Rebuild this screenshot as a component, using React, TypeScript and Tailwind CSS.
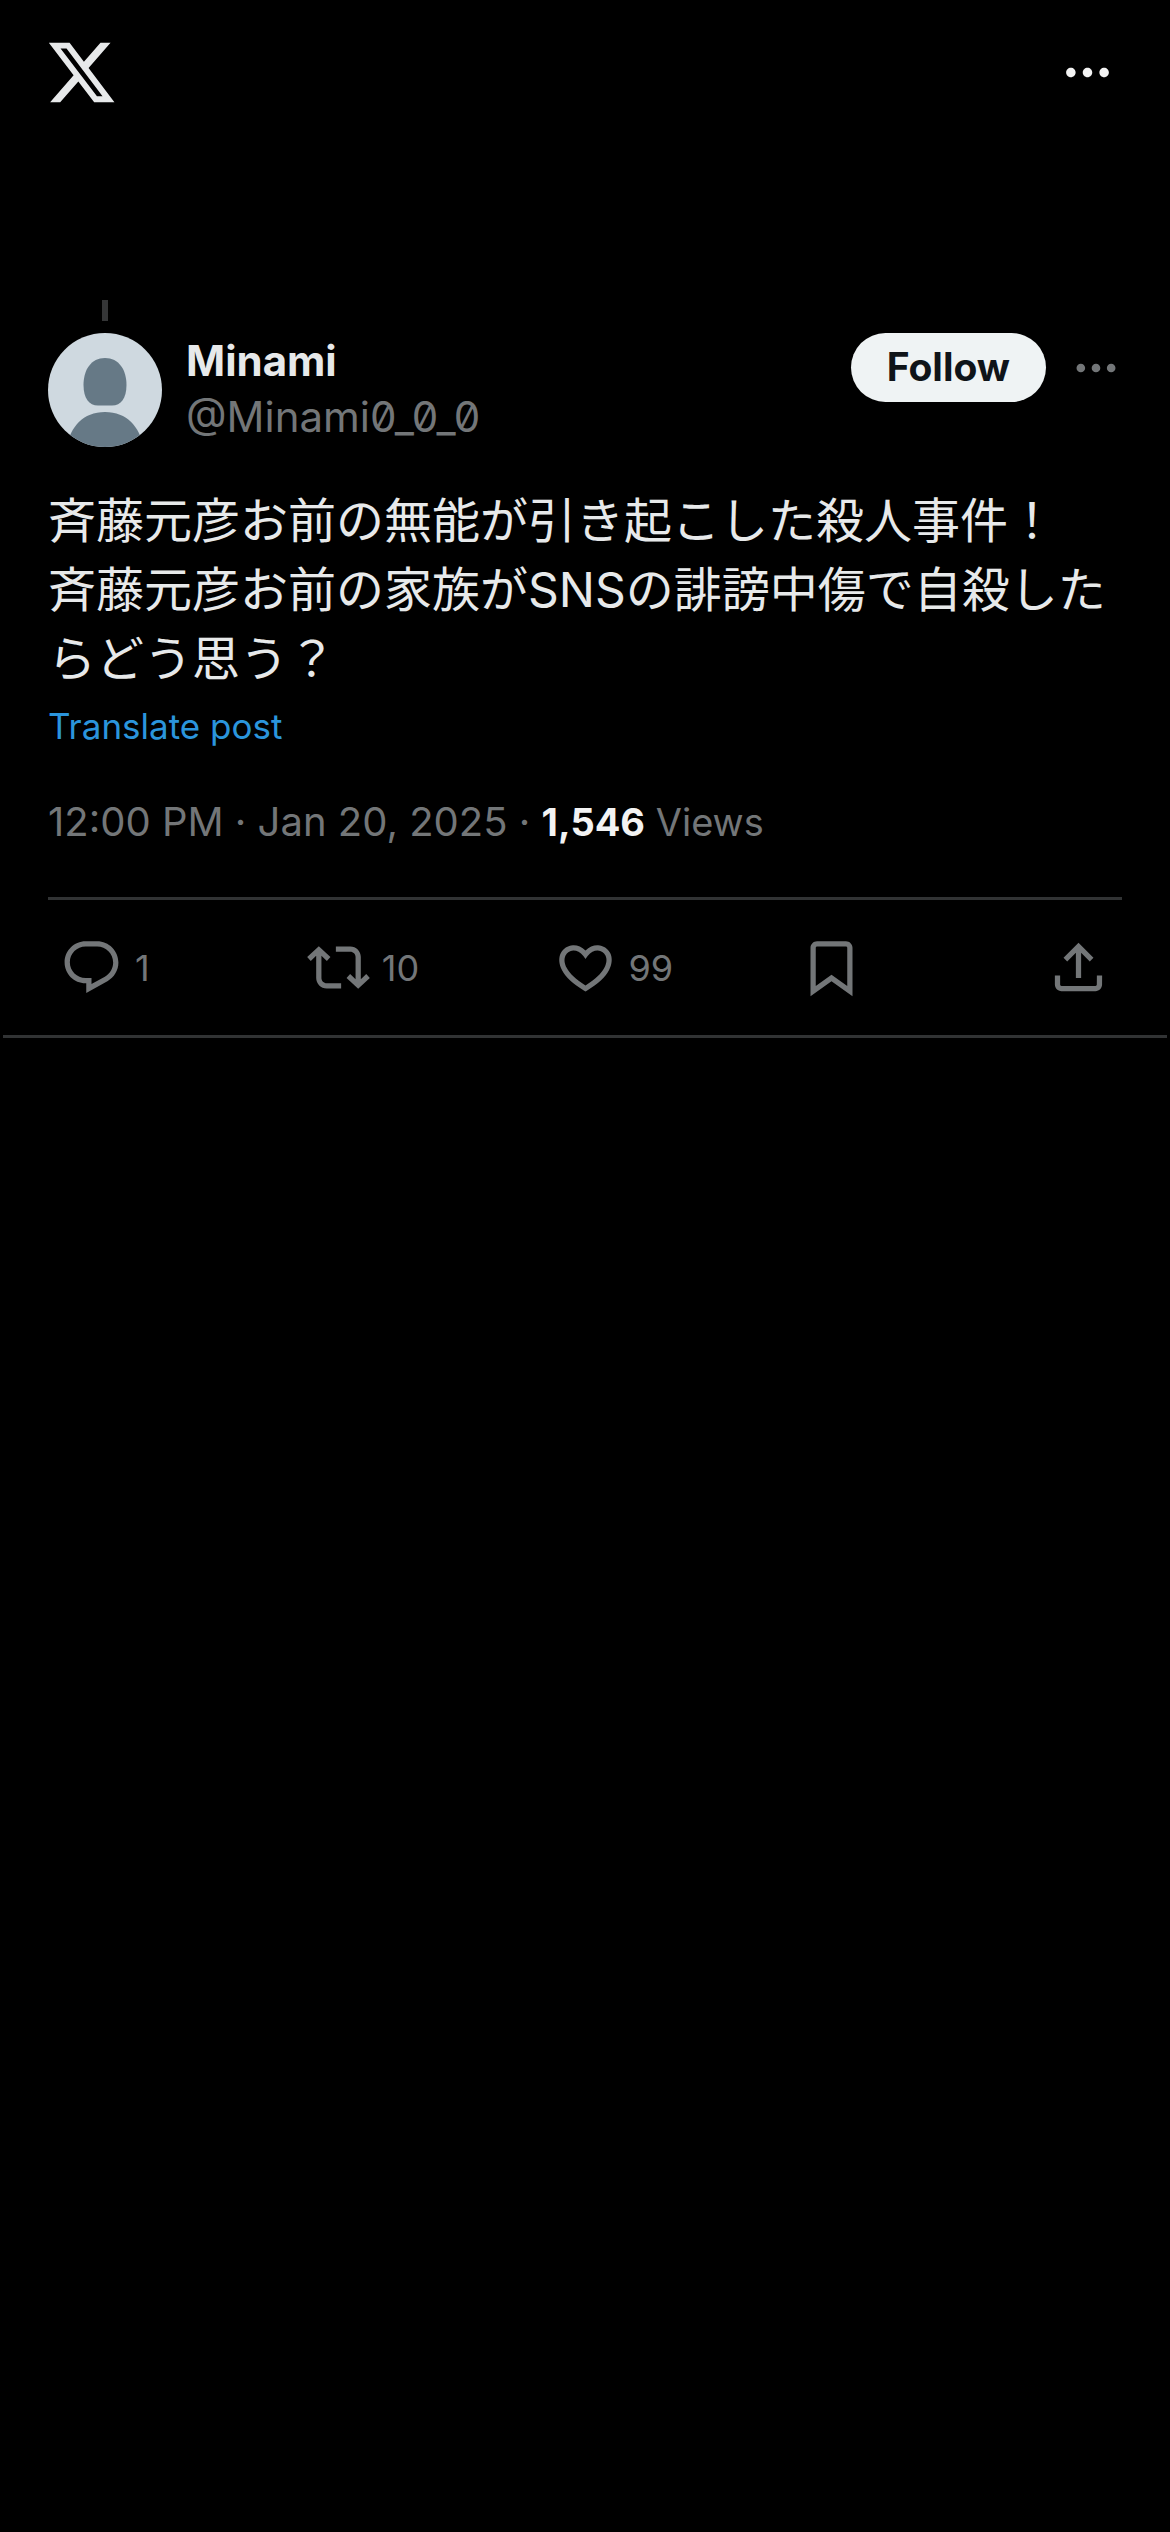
import type { ReactNode } from "react";

function Icon({ d, className }: { d: string; className: string }) {
  return (
    <svg viewBox="0 0 24 24" aria-hidden="true" className={`shrink-0 fill-current ${className}`}>
      <path d={d} />
    </svg>
  );
}

const paths = {
  logo: "M18.244 2.25h3.308l-7.227 8.26 8.502 11.24H16.17l-5.214-6.817L4.99 21.75H1.68l7.73-8.835L1.254 2.25H8.08l4.713 6.231zm-1.161 17.52h1.833L7.084 4.126H5.117z",
  more: "M3 12c0-1.1.9-2 2-2s2 .9 2 2-.9 2-2 2-2-.9-2-2zm9 2c1.1 0 2-.9 2-2s-.9-2-2-2-2 .9-2 2 .9 2 2 2zm7 0c1.1 0 2-.9 2-2s-.9-2-2-2-2 .9-2 2 .9 2 2 2z",
  reply:
    "M1.751 10c0-4.42 3.584-8 8.005-8h4.366c4.49 0 8.129 3.64 8.129 8.13 0 2.96-1.607 5.68-4.196 7.11l-8.054 4.46v-3.69h-.067c-4.49.1-8.183-3.51-8.183-8.01zm8.005-6c-3.317 0-6.005 2.69-6.005 6 0 3.37 2.77 6.08 6.138 6.01l.351-.01h1.761v2.3l5.087-2.81c1.951-1.08 3.163-3.13 3.163-5.36 0-3.39-2.744-6.13-6.129-6.13H9.756z",
  repost:
    "M4.5 3.88l4.432 4.14-1.364 1.46L5.5 7.55V16c0 1.1.896 2 2 2H13v2H7.5c-2.209 0-4-1.79-4-4V7.55L1.432 9.48.068 8.02 4.5 3.88zM16.5 6H11V4h5.5c2.209 0 4 1.79 4 4v8.45l2.068-1.93 1.364 1.46-4.432 4.14-4.432-4.14 1.364-1.46 2.068 1.93V8c0-1.1-.896-2-2-2z",
  like: "M16.697 5.5c-1.222-.06-2.679.51-3.89 2.16l-.805 1.09-.806-1.09C9.984 6.01 8.526 5.44 7.304 5.5c-1.243.07-2.349.78-2.91 1.91-.552 1.12-.633 2.78.479 4.82 1.074 1.97 3.257 4.27 7.129 6.61 3.87-2.34 6.052-4.64 7.126-6.61 1.111-2.04 1.03-3.7.477-4.82-.561-1.13-1.666-1.84-2.908-1.91zm4.187 7.69c-1.351 2.48-4.001 5.12-8.379 7.67l-.503.3-.504-.3c-4.379-2.55-7.029-5.19-8.382-7.67-1.36-2.5-1.41-4.86-.514-6.67.887-1.79 2.647-2.91 4.601-3.01 1.651-.09 3.368.56 4.798 2.01 1.429-1.45 3.146-2.1 4.796-2.01 1.954.1 3.714 1.22 4.601 3.01.896 1.81.846 4.17-.514 6.67z",
  bookmark:
    "M4 4.5C4 3.12 5.119 2 6.5 2h11C18.881 2 20 3.12 20 4.5v18.44l-8-5.71-8 5.71V4.5zM6.5 4c-.276 0-.5.22-.5.5v14.56l6-4.29 6 4.29V4.5c0-.28-.224-.5-.5-.5h-11z",
  share:
    "M12 2.59l5.7 5.7-1.41 1.42L13 6.41V16h-2V6.41l-3.3 3.3-1.41-1.42L12 2.59zM21 15l-.02 3.51c0 1.38-1.12 2.49-2.5 2.49H5.5C4.11 21 3 19.88 3 18.5V15h2v3.5c0 .28.22.5.5.5h12.98c.28 0 .5-.22.5-.5L19 15h2z",
};

function Action({ label, icon, count, last }: { label: string; icon: string; count?: number; last?: boolean }) {
  return (
    <li className={last ? "flex" : "flex flex-1"}>
      <button type="button" aria-label={label} className="flex items-center gap-3">
        <Icon d={icon} className="size-[63px]" />
        {count !== undefined && <span className="text-[36px] leading-[48px]">{count}</span>}
      </button>
    </li>
  );
}

function Avatar() {
  return (
    <svg viewBox="0 0 114 114" role="img" aria-label="Minami" className="size-[114px] rounded-full">
      <rect width="114" height="114" fill="#cfd9e0" />
      <path
        fill="#667986"
        d="M57 25C71 25 78.500 37 78.500 52C78.500 65 73 72.500 64 72.500H50C41 72.500 35.500 65 35.500 52C35.500 37 43 25 57 25z"
      />
      <path fill="#667986" d="M19 114C22 94 35 79 57 79S92 94 95 114z" />
    </svg>
  );
}

function Meta({ children }: { children: ReactNode }) {
  return <p className="mt-[42px] text-[40px] leading-[60px] text-[#737678]">{children}</p>;
}

export default function App() {
  return (
    <div className="min-h-screen bg-black font-['Inter','Noto_Sans_CJK_JP',sans-serif] text-[#e7e9ea]">
      <header className="flex items-center justify-between py-[36px] pr-[54px] pl-[45px]">
        <a href="#home" aria-label="X">
          <Icon d={paths.logo} className="size-[73px]" />
        </a>
        <button type="button" aria-label="Menu" className="text-[#f3f3f3]">
          <Icon d={paths.more} className="size-[57px]" />
        </button>
      </header>

      <main className="mx-[3px] mt-[155px] border-b-3 border-[#313334]">
        <article className="px-[45px]">
          <div className="ml-[54px] h-[21px] w-[6px] bg-[#353637]" />
          <div className="mt-3 flex items-start">
            <Avatar />
            <div className="ml-[24px] flex-1 text-[42px] leading-[56px]">
              <a href="#profile" className="block font-bold">
                Minami
              </a>
              <a href="#profile" className="block text-[#737678] [font-feature-settings:'zero']">
                @Minami0_0_0
              </a>
            </div>
            <button
              type="button"
              className="h-[69px] rounded-full bg-[#eff3f4] px-[36px] text-[39px] font-bold text-[#0f1419]"
            >
              Follow
            </button>
            <button type="button" aria-label="More" className="ml-[24px] flex h-[69px] items-center text-[#737678]">
              <Icon d={paths.more} className="size-[52px]" />
            </button>
          </div>

          <p lang="ja" className="mt-[39px] text-[48px] leading-[69px] break-all">
            斉藤元彦お前の無能が引き起こした殺人事件！
            <br />
            斉藤元彦お前の家族がSNSの誹謗中傷で自殺したらどう思う？
          </p>
          <button type="button" className="mt-[9px] block text-[35px] leading-[48px] text-[#2b95dc]">
            Translate post
          </button>

          <Meta>
            <time dateTime="2025-01-20T12:00">12:00 PM · Jan 20, 2025</time>
            {" · "}
            <span className="text-[38px]">
              <span className="font-bold text-[#f3f3f3]">1,546</span> Views
            </span>
          </Meta>

          <ul className="mt-[45px] flex items-center border-t-3 border-[#313334] px-3 py-[36px] text-[#737678]">
            <Action label="Reply" icon={paths.reply} count={1} />
            <Action label="Repost" icon={paths.repost} count={10} />
            <Action label="Like" icon={paths.like} count={99} />
            <Action label="Bookmark" icon={paths.bookmark} />
            <Action label="Share" icon={paths.share} last />
          </ul>
        </article>
      </main>
    </div>
  );
}
